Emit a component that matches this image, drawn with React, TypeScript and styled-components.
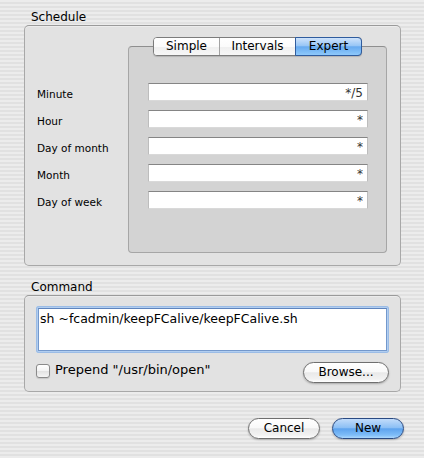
import React from "react";
import styled, { createGlobalStyle } from "styled-components";

const Global = createGlobalStyle`
  html, body { margin: 0; padding: 0; }
  body { font-family: "DejaVu Sans", "Liberation Sans", sans-serif; }
  * { box-sizing: border-box; }
`;

const Window = styled.div`
  width: 424px;
  height: 458px;
  padding: 9px 20px 0 24px;
  background: repeating-linear-gradient(
    to bottom,
    #ececec 0px,
    #ececec 2px,
    #e1e1e1 2px,
    #e1e1e1 4px
  );
  font-family: "DejaVu Sans", "Liberation Sans", sans-serif;
  color: #000;
  display: flex;
  flex-direction: column;
`;

const SectionTitle = styled.div<{ $top?: number }>`
  margin: ${(p) => p.$top ?? 0}px 0 0 7px;
  font-size: 12px;
  line-height: 16px;
  height: 16px;
`;

const GroupBox = styled.div`
  margin-right: 3px;
  border: 1px solid #a8a8a8;
  border-top-color: #9a9a9a;
  border-radius: 5px;
  background: #e2e2e2;
  box-shadow: inset 0 1px 0 #ececec;
`;

const ScheduleBody = styled.div`
  display: flex;
`;

const LabelColumn = styled.div`
  width: 103px;
  padding: 57px 0 0 12px;
  display: flex;
  flex-direction: column;
  gap: 9px;
`;

const FieldLabel = styled.div`
  height: 18px;
  font-size: 10.5px;
  line-height: 22px;
  white-space: nowrap;
`;

const TabArea = styled.div`
  width: 259px;
  margin-right: 13px;
  padding: 11px 0 12px;
  display: flex;
  flex-direction: column;
  align-items: center;
`;

const Segmented = styled.div`
  position: relative;
  z-index: 1;
  display: flex;
  height: 19px;
  border: 1px solid #7c7c7c;
  border-radius: 4px;
  background: #fff;
  box-shadow: 0 1px 1px rgba(0, 0, 0, 0.15);
`;

const Segment = styled.div<{ $w: number; $active?: boolean; $first?: boolean }>`
  width: ${(p) => p.$w}px;
  height: ${(p) => (p.$active ? 19 : 17)}px;
  font-size: 12px;
  line-height: 17px;
  text-align: center;
  border-left: ${(p) => (p.$first ? "none" : "1px solid #a3a3a3")};
  border-radius: ${(p) => (p.$first ? "3px 0 0 3px" : p.$active ? "0 4px 4px 0" : "0")};
  background: linear-gradient(
    to bottom,
    #ffffff 0%,
    #fbfbfb 50%,
    #efefef 51%,
    #f7f7f7 100%
  );
  ${(p) =>
    p.$active &&
    `
    margin: -1px -1px -1px 0;
    border: 1px solid #2f5c9e;
    background: linear-gradient(
      to bottom,
      #cfe3fb 0%,
      #98c6f6 45%,
      #67aaf0 52%,
      #8ec9fb 100%
    );
  `}
`;

const TabPanel = styled.div`
  align-self: stretch;
  margin-top: -10px;
  background: #d3d3d3;
  border: 1px solid #a6a6a6;
  border-top-color: #8f8f8f;
  border-radius: 4px;
  padding: 36px 18px 43px 19px;
  display: flex;
  flex-direction: column;
  gap: 9px;
`;

const Field = styled.input`
  display: block;
  width: 100%;
  height: 18px;
  margin: 0;
  padding: 1px 4px 0;
  border: 1px solid #bdbdbd;
  border-top-color: #858585;
  border-bottom-color: #d9d9d9;
  border-radius: 0;
  background: #fff;
  font-family: "DejaVu Sans", sans-serif;
  font-size: 12px;
  color: #333;
  text-align: right;
  outline: none;
`;

const CommandBody = styled.div`
  padding: 10px 11px 8px;
  display: flex;
  flex-direction: column;
  gap: 9px;
`;

const TextFrame = styled.div`
  height: 47px;
  padding: 2px;
  border-radius: 3px;
  background: #b2cef0;
  box-shadow: inset 0 0 0 1px #9bbce6;
`;

const TextArea = styled.textarea`
  display: block;
  width: 100%;
  height: 100%;
  margin: 0;
  padding: 2px 1px 0;
  border: 1px solid #7398cc;
  border-top-color: #5f84bc;
  background: #fff;
  resize: none;
  overflow: hidden;
  outline: none;
  font-family: "DejaVu Sans", sans-serif;
  font-size: 12.5px;
  line-height: 15px;
  color: #000;
`;

const CommandFooter = styled.div`
  display: flex;
  justify-content: space-between;
  align-items: flex-start;
  height: 21px;
`;

const CheckLabel = styled.label`
  display: flex;
  align-items: center;
  gap: 5px;
  font-size: 13px;
  line-height: 16px;
  white-space: nowrap;
`;

const CheckBox = styled.span`
  display: block;
  width: 14px;
  height: 14px;
  margin-top: 1px;
  border: 1px solid #8a8a8a;
  border-radius: 3px;
  background: linear-gradient(to bottom, #ffffff 0%, #f3f3f3 50%, #e2e2e2 51%, #f5f5f5 100%);
  box-shadow: 0 1px 1px rgba(0, 0, 0, 0.12);
`;

const PillButton = styled.button<{ $w: number; $primary?: boolean }>`
  width: ${(p) => p.$w}px;
  height: 21px;
  margin: 0;
  padding: 0;
  border: 1px solid ${(p) => (p.$primary ? "#2a4a82" : "#6f6f6f")};
  border-radius: 11px;
  font-family: "DejaVu Sans", sans-serif;
  font-size: 12px;
  line-height: 19px;
  color: #000;
  text-align: center;
  box-shadow: 0 1px 2px rgba(0, 0, 0, 0.25);
  background: ${(p) =>
    p.$primary
      ? "linear-gradient(to bottom, #c2dcfa 0%, #8dc0f5 45%, #5ea3ee 52%, #7fbdf8 85%, #acd8fd 100%)"
      : "linear-gradient(to bottom, #ffffff 0%, #f9f9f9 45%, #e9e9e9 52%, #f2f2f2 85%, #ffffff 100%)"};
`;

const ButtonRow = styled.div`
  margin-top: 26px;
  display: flex;
  justify-content: flex-end;
  gap: 12px;
`;

const labels = ["Minute", "Hour", "Day of month", "Month", "Day of week"];
const values = ["*/5", "*", "*", "*", "*"];

export default function App() {
  return (
    <>
      <Global />
      <Window>
        <SectionTitle>Schedule</SectionTitle>
        <GroupBox>
          <ScheduleBody>
            <LabelColumn>
              {labels.map((l) => (
                <FieldLabel key={l}>{l}</FieldLabel>
              ))}
            </LabelColumn>
            <TabArea>
              <Segmented>
                <Segment $w={65} $first>
                  Simple
                </Segment>
                <Segment $w={76}>Intervals</Segment>
                <Segment $w={67} $active>
                  Expert
                </Segment>
              </Segmented>
              <TabPanel>
                {values.map((v, i) => (
                  <Field key={i} readOnly defaultValue={v} />
                ))}
              </TabPanel>
            </TabArea>
          </ScheduleBody>
        </GroupBox>

        <SectionTitle $top={13}>Command</SectionTitle>
        <GroupBox>
          <CommandBody>
            <TextFrame>
              <TextArea readOnly defaultValue="sh ~fcadmin/keepFCalive/keepFCalive.sh" />
            </TextFrame>
            <CommandFooter>
              <CheckLabel>
                <CheckBox />
                Prepend "/usr/bin/open"
              </CheckLabel>
              <PillButton $w={86}>Browse...</PillButton>
            </CommandFooter>
          </CommandBody>
        </GroupBox>

        <ButtonRow>
          <PillButton $w={72}>Cancel</PillButton>
          <PillButton $w={72} $primary>
            New
          </PillButton>
        </ButtonRow>
      </Window>
    </>
  );
}
